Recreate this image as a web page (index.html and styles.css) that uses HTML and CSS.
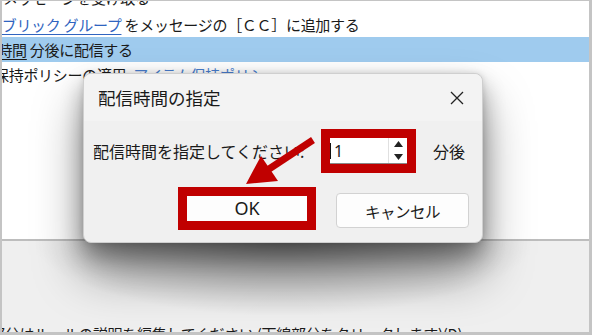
FILE: index.html
```html
<!DOCTYPE html>
<html lang="ja">
<head>
  <meta charset="UTF-8">
  <title>配信時間の指定</title>
  <link rel="stylesheet" href="styles.css">
</head>
<body>
  <div class="screen">

    <!-- ルール一覧 (背景) -->
    <div class="rules">
      <p class="line first">メッセージを受け取る</p>
      <p class="line shift"><span class="link">パブリック グループ</span> をメッセージの［ＣＣ］に追加する</p>
      <p class="line sel shift-sm"><span class="uline">指定時間</span> 分後に配信する</p>
      <p class="line shift-xs">保持ポリシーの適用: <span class="link plain">アイテム保持ポリシー</span></p>
    </div>

    <div class="desc">
      <p class="line shift-desc">部分はルールの説明を編集してください (下線部分をクリックします)(D)</p>
    </div>

    <!-- ダイアログ -->
    <div class="dialog">
      <div class="dlg-title">
        <span>配信時間の指定</span>
        <svg class="close" width="14" height="14" viewBox="0 0 14 14">
          <path d="M1 1 L13 13 M13 1 L1 13" stroke="#222" stroke-width="1.3" fill="none"/>
        </svg>
      </div>
      <div class="dlg-body">
        <div class="row">
          <span class="label">配信時間を指定してください:</span>
          <div class="mark spin-mark">
            <div class="spin">
              <span class="value">1</span>
              <div class="spin-btns">
                <svg width="9" height="6" viewBox="0 0 9 6"><path d="M4.5 0 L9 6 L0 6 Z" fill="#222"/></svg>
                <svg width="9" height="6" viewBox="0 0 9 6"><path d="M0 0 L9 0 L4.5 6 Z" fill="#222"/></svg>
              </div>
            </div>
          </div>
          <span class="unit">分後</span>
        </div>
        <div class="row buttons">
          <div class="mark ok-mark">
            <button class="btn ok">OK</button>
          </div>
          <button class="btn cancel">キャンセル</button>
        </div>
      </div>
    </div>

    <!-- 注釈の矢印 -->
    <svg class="arrow" width="592" height="335" viewBox="0 0 592 335">
      <line x1="313" y1="140" x2="266" y2="171" stroke="#c00000" stroke-width="7"/>
      <polygon points="246,184 278,181 261,156" fill="#c00000"/>
    </svg>

  </div>
</body>
</html>
```

FILE: styles.css
```css
html, body {
  margin: 0;
  padding: 0;
  background: #ffffff;
}

.screen {
  position: relative;
  width: 592px;
  height: 335px;
  overflow: hidden;
  font-family: "Noto Sans CJK JP", sans-serif;
  color: #1a1a1a;
  background: #efefef;
}

/* 外枠 */
.screen::after {
  content: "";
  position: absolute;
  inset: 0;
  border-style: solid;
  border-color: #c4c4c4;
  border-width: 1px 3px 3px 2px;
  pointer-events: none;
}

.rules {
  height: 239px;
  background: #ffffff;
  border-bottom: 2px solid #bdbdbd;
  overflow: hidden;
}

.line {
  margin: 0;
  height: 25px;
  line-height: 25px;
  font-size: 15px;
  letter-spacing: -0.3px;
  white-space: nowrap;
}

.first {
  margin-top: -15px;
  margin-bottom: 2px;
  padding-left: 3px;
}

.shift { margin-left: -13px; }
.shift-sm { margin-left: -32px; }
.shift-xs { margin-left: -6px; }

.sel {
  background: #9fcbee;
  width: 700px;
}

.link {
  color: #2f64c0;
  text-decoration: underline;
  text-underline-offset: 3px;
}

.link.plain {
  color: #4a7fd0;
}

.uline {
  text-decoration: underline;
  text-underline-offset: 3px;
}

/* ダイアログの影が落ちる部分 */
.desc {
  height: 94px;
  box-sizing: border-box;
  padding-top: 80px;
  background: radial-gradient(ellipse 250px 75px at 283px 0, rgba(0, 0, 0, 0.3), rgba(0, 0, 0, 0) 100%), #efefef;
}

.shift-desc { margin-left: -10px; }

/* ダイアログ */
.dialog {
  position: absolute;
  left: 83px;
  top: 73px;
  width: 400px;
  height: 170px;
  box-sizing: border-box;
  background: #f0f0f0;
  border: 1px solid #cfcfcf;
  border-radius: 8px;
  box-shadow: 0 12px 22px rgba(0, 0, 0, 0.32), 0 30px 50px rgba(0, 0, 0, 0.4), 0 0 6px rgba(0, 0, 0, 0.12);
}

.dlg-title {
  height: 47px;
  display: flex;
  align-items: center;
  justify-content: space-between;
  padding: 0 18px 0 14px;
  font-size: 17.5px;
  background: #f3f3f3;
  border-radius: 8px 8px 0 0;
}

.dlg-body {
  padding: 8px 0 0 9px;
}

.row {
  display: flex;
  align-items: center;
}

.label {
  font-size: 16px;
  width: 228px;
  white-space: nowrap;
  overflow: hidden;
}

.mark {
  border: 9px solid #c00000;
  display: flex;
}

.spin {
  width: 77px;
  height: 25px;
  background: #ffffff;
  display: flex;
  align-items: center;
  justify-content: space-between;
  border-bottom: 1px solid #888;
}

.value {
  font-family: "Noto Sans", sans-serif;
  font-size: 16px;
  padding-left: 3px;
  border-left: 1.5px solid #111;
  line-height: 16px;
}

.spin-btns {
  width: 18px;
  height: 100%;
  border-left: 1px solid #e0e0e0;
  display: flex;
  flex-direction: column;
  justify-content: space-around;
  align-items: center;
}

.unit {
  font-size: 16px;
  margin-left: 17px;
}

.buttons {
  margin-top: 14px;
  padding-left: 85px;
}

.btn {
  border: none;
  background: #fdfdfd;
  color: #1a1a1a;
  padding: 0;
}

.ok {
  width: 120px;
  height: 25px;
  font-family: "Noto Sans", "Noto Sans CJK JP", sans-serif;
  font-size: 18px;
  line-height: 25px;
}

.cancel {
  margin-left: 20px;
  margin-top: 4px;
  width: 133px;
  height: 35px;
  border: 1px solid #d2d2d2;
  border-radius: 4px;
  font-family: "Noto Sans CJK JP", sans-serif;
  font-size: 15.5px;
  letter-spacing: -0.5px;
}

.arrow {
  position: absolute;
  left: 0;
  top: 0;
  pointer-events: none;
}
```
